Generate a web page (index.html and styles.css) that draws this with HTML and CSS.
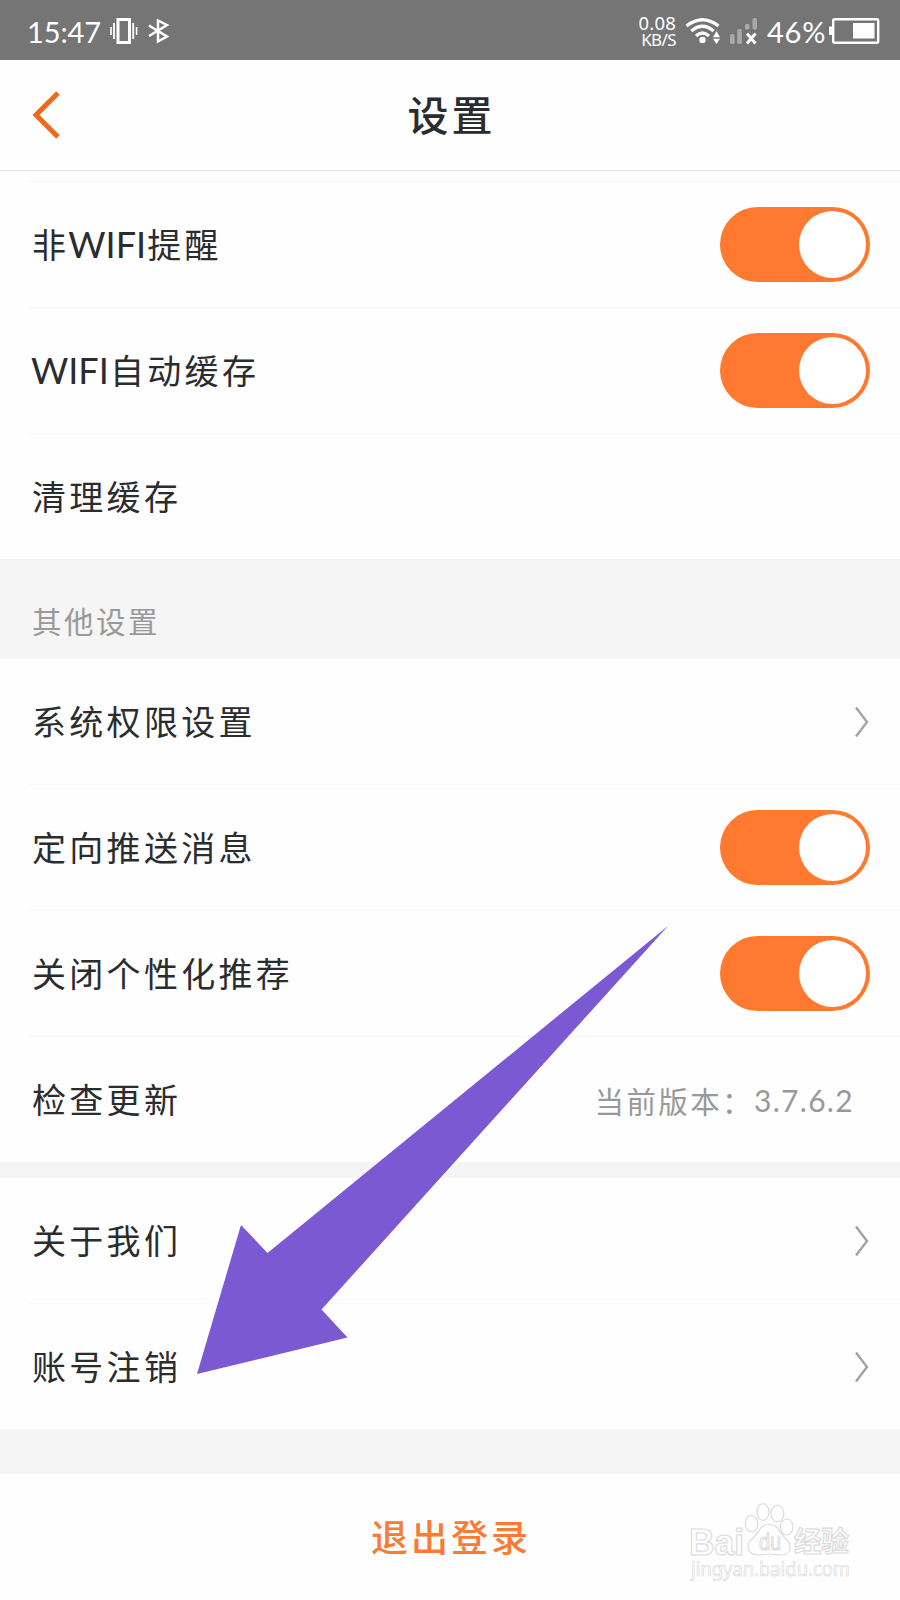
FILE: index.html
```html
<!DOCTYPE html>
<html lang="zh-CN">
<head>
<meta charset="utf-8">
<title>设置</title>
<link rel="stylesheet" href="styles.css">
</head>
<body>
<div class="screen">
  <div class="status">
    <span class="time">15:47</span>
    <svg class="vibrate" width="28" height="26" viewBox="0 0 28 26" fill="none" stroke="#fff"><rect x="8" y="1.5" width="11.5" height="23" stroke-width="3"/><path d="M4 5v16M23.2 5v16" stroke-width="1.8"/><path d="M1 9v8M26.6 9v8" stroke-width="1.6"/></svg>
    <svg class="bluetooth" width="22" height="26" viewBox="0 0 22 26" fill="none" stroke="#fff" stroke-width="2.5"><path d="M1 7.500L19 18.500L10 23.500V2.500L19 7L1 18"/></svg>
    <span class="spacer"></span>
    <div class="speed"><span class="rate">0.08</span><span class="unit">KB/S</span></div>
    <svg class="wifi" width="36" height="28" viewBox="0 0 36 28" fill="none" stroke="#fff" stroke-width="3.200"><path d="M1.500 9Q17.500-3.500 33.500 9M6.300 14Q17.500 4.500 28.700 14M11 19Q17.500 13 24 19"/><circle cx="17.500" cy="23" r="3.200" fill="#fff" stroke="none"/><path d="M28 20.300L31.500 14L35 20.300ZM28 21.700L31.500 27L35 21.700Z" fill="#fff" stroke="none"/></svg>
    <svg class="signal" width="28" height="27" viewBox="0 0 28 27"><g fill="#a9a9a9"><rect x="0" y="16" width="4.500" height="10" rx="1.500"/><rect x="7.300" y="11" width="4.500" height="15" rx="1.500"/><rect x="15" y="6" width="4.500" height="5.500" rx="1.500"/><rect x="22.500" y="0" width="4.500" height="11.500" rx="1.500"/></g><path d="M17 15.500L25.500 25.500M25.500 15.500L17 25.500" stroke="#fff" stroke-width="3"/></svg>
    <span class="percent">46%</span>
    <svg class="battery" width="51" height="26" viewBox="0 0 51 26"><rect x="4.200" y="1.200" width="45" height="23.500" rx="1.500" fill="none" stroke="#fff" stroke-width="2.400"/><rect x="0" y="8.500" width="4" height="8.500" rx="1" fill="#fff"/><rect x="24" y="5" width="21.500" height="15.500" fill="#fff"/></svg>
  </div>

  <header class="header">
    <svg class="back" width="28" height="48" viewBox="0 0 28 48" fill="none" stroke="#ec6a1e" stroke-width="5"><path d="M26 2L4 24L26 46"/></svg>
    <h1 class="title">设置</h1>
  </header>

  <main class="settings">
    <section class="group first">
      <div class="row"><span class="label">非<span class="latin">WIFI</span>提醒</span><span class="toggle"><span class="knob"></span></span></div>
      <div class="row"><span class="label"><span class="latin wide">WIFI</span>自动缓存</span><span class="toggle"><span class="knob"></span></span></div>
      <div class="row"><span class="label">清理缓存</span></div>
    </section>
    <div class="section-name">其他设置</div>
    <section class="group">
      <div class="row"><span class="label">系统权限设置</span><svg class="chevron" width="14" height="32" viewBox="0 0 14 32"><path d="M1 1.500L12 16L1 30.500"/></svg></div>
      <div class="row"><span class="label">定向推送消息</span><span class="toggle"><span class="knob"></span></span></div>
      <div class="row"><span class="label">关闭个性化推荐</span><span class="toggle"><span class="knob"></span></span></div>
      <div class="row last"><span class="label">检查更新</span><span class="version">当前版本：<span class="number">3.7.6.2</span></span></div>
    </section>
    <section class="group about">
      <div class="row"><span class="label">关于我们</span><svg class="chevron" width="14" height="32" viewBox="0 0 14 32"><path d="M1 1.500L12 16L1 30.500"/></svg></div>
      <div class="row last"><span class="label">账号注销</span><svg class="chevron" width="14" height="32" viewBox="0 0 14 32"><path d="M1 1.500L12 16L1 30.500"/></svg></div>
    </section>
  </main>

  <footer class="logout">退出登录</footer>

  <svg class="arrow" width="472" height="448" viewBox="0 0 472 448"><path d="M471 0L70.500 327L44 299L0 448L150.500 411.500L124.500 383.500Z" fill="#7a59d3"/></svg>

  <svg class="watermark" width="170" height="90" viewBox="0 0 170 90" fill="#fefefe" stroke="#dcdcdc" stroke-width="1.200">
    <text class="mark-latin" x="0" y="54.500" font-size="37" textLength="55" lengthAdjust="spacingAndGlyphs">Bai</text>
    <ellipse cx="62.500" cy="23.500" rx="6.300" ry="8.200"/><ellipse cx="74" cy="12" rx="6" ry="8.400"/><ellipse cx="88.300" cy="13.500" rx="6.500" ry="8.200"/><ellipse cx="97.700" cy="27" rx="6.300" ry="8"/>
    <path d="M80 24.500C70 24.500 70 34 63 39C56 45 59 55 69 55C73 55 76 54 80 54C85 54 87 55 92 55C102 55 104 46 97 39C90 33 90 24.500 80 24.500Z"/>
    <text class="mark-latin du" x="70" y="50" font-size="24" textLength="22" lengthAdjust="spacingAndGlyphs">du</text>
    <text class="mark-cjk" x="105" y="52" font-size="28" textLength="55" lengthAdjust="spacingAndGlyphs">经验</text>
    <text class="mark-url" x="2" y="75.500" font-size="19" textLength="159" lengthAdjust="spacingAndGlyphs">jingyan.baidu.com</text>
  </svg>
</div>
</body>
</html>
```
FILE: styles.css
```css
* { box-sizing: border-box; }
body { margin: 0; background: #fefefe; }
.screen {
  position: relative;
  width: 900px;
  height: 1600px;
  overflow: hidden;
  display: flex;
  flex-direction: column;
  background: #fefefe;
  color: #2b2c2e;
  font-family: Lato, "Noto Sans CJK SC", sans-serif;
}
.screen svg { display: block; flex: none; }

/* status bar */
.status {
  height: 60px;
  flex: none;
  display: flex;
  align-items: center;
  padding: 2px 20px 0 27px;
  background: #757575;
  color: #fff;
}
.time { width: 73px; font-size: 29px; letter-spacing: -.1px; white-space: nowrap; }
.vibrate { margin-left: 10px; }
.bluetooth { margin-left: 10px; }
.spacer { flex: 1; }
.speed { width: 40px; display: flex; flex-direction: column; align-items: flex-end; line-height: 17px; font-family: "Noto Sans", sans-serif; margin-right: 9px; }
.rate { font-size: 18.5px; letter-spacing: .2px; }
.unit { font-size: 17px; letter-spacing: -.6px; }
.signal { margin-left: 9px; }
.percent { width: 61px; margin: 0 1px 0 9px; font-size: 29px; letter-spacing: .8px; white-space: nowrap; }

/* title bar */
.header {
  height: 111px;
  flex: none;
  display: grid;
  grid-template-columns: 60px 1fr 60px;
  align-items: center;
  border-bottom: 1px solid #e2e2e2;
}
.back { margin-left: 32px; }
.title { margin: 0; padding-top: 2px; text-align: center; font-size: 41px; line-height: 60px; font-weight: 500; letter-spacing: 3px; text-indent: 3px; }

/* settings rows */
.settings { flex: none; background: #f5f5f5; }
.group { padding-left: 28px; background: #fefefe; }
.first { padding-top: 10px; }
.first .row:first-child { border-top: 1px solid #f8f8f8; height: 127px; }
.row {
  height: 126px;
  display: flex;
  align-items: center;
  justify-content: space-between;
  padding: 0 30px 0 4px;
  border-bottom: 1px solid #f8f8f8;
}
.first .row:last-child { height: 125px; border: 0; }
.row.last { height: 125px; border: 0; }
.label { font-size: 34px; line-height: 50px; letter-spacing: 3.3px; white-space: nowrap; }
.latin { display: inline-block; width: 78px; margin-left: -1px; margin-right: 1px; font-size: 36px; letter-spacing: 0; }
.latin.wide { width: 79px; margin-right: 0; }
.toggle { width: 150px; height: 75px; padding: 4px; border-radius: 38px; background: #ff7a30; display: flex; justify-content: flex-end; }
.knob { width: 67px; height: 67px; border-radius: 50%; background: #fff; }
.chevron { margin-right: 1px; fill: none; stroke: #a3a3a3; stroke-width: 2.4; }
.section-name { height: 100px; padding: 38px 32px 0; font-size: 29.5px; line-height: 50px; letter-spacing: 2.5px; color: #999; }
.version { display: flex; align-items: center; padding-right: 16px; font-size: 29.5px; letter-spacing: 2.4px; color: #999; white-space: nowrap; }
.number { width: 100px; font-size: 30px; letter-spacing: 1.3px; }
.about { margin-top: 16px; }
.about .row.last { height: 125px; }

/* bottom action */
.logout { border-top: 45px solid #f5f5f5; flex: 1; padding: 36px 0 0 2px; text-align: center; font-size: 37px; line-height: 56px; font-weight: 500; letter-spacing: 3px; color: #fb7b34; }

.arrow { position: absolute; left: 197px; top: 926px; }
.watermark { position: absolute; left: 689px; top: 1500px; }
.mark-latin { font-family: "Liberation Sans", sans-serif; font-weight: 700; }
.du { font-weight: 400; }
.mark-cjk { font-family: "Noto Sans CJK SC", sans-serif; font-weight: 700; }
.mark-url { font-family: "Noto Sans", sans-serif; stroke-width: .7px; }
```
